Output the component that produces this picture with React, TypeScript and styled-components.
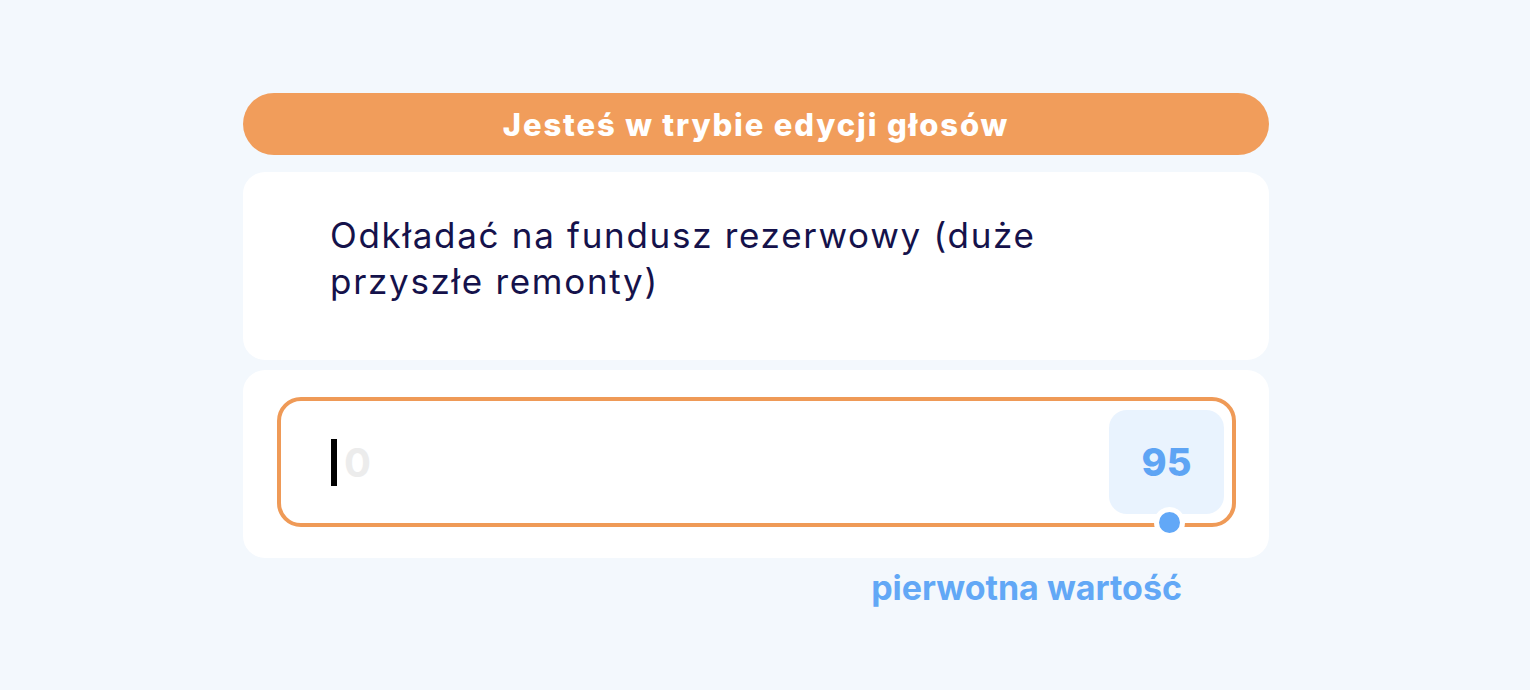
import React from "react";
import styled, { createGlobalStyle } from "styled-components";

const GlobalStyle = createGlobalStyle`
  html, body {
    margin: 0;
    padding: 0;
    background: #f3f8fd;
  }
  body {
    font-family: "Inter", "Noto Sans", sans-serif;
  }
`;

const Page = styled.div`
  width: 1530px;
  height: 690px;
  box-sizing: border-box;
  padding: 93px 0 0 243px;
  background: #f3f8fd;
`;

const Column = styled.div`
  width: 1026px;
  display: flex;
  flex-direction: column;
`;

const Banner = styled.div`
  height: 62px;
  border-radius: 31px;
  background: #f19d5b;
  color: #ffffff;
  display: flex;
  align-items: center;
  justify-content: center;
  font-size: 31px;
  font-weight: 800;
  letter-spacing: 1.85px;
`;

const Card = styled.div<{ $top: number }>`
  margin-top: ${(p) => p.$top}px;
  background: #ffffff;
  border-radius: 22px;
`;

const Question = styled.div`
  padding: 40px 87px 56px;
  font-size: 35px;
  line-height: 46px;
  letter-spacing: 1.7px;
  color: #15124b;
  max-width: 760px;
`;

const InputArea = styled.div`
  padding: 27px 33px 31px 34px;
`;

const Field = styled.div`
  position: relative;
  height: 130px;
  box-sizing: border-box;
  border: 4px solid #ef9a57;
  border-radius: 24px;
  background: #ffffff;
  display: flex;
  align-items: center;
  padding: 0 8px 0 50px;
`;

const Caret = styled.span`
  width: 6px;
  height: 47px;
  background: #000000;
  margin-right: 7px;
`;

const Placeholder = styled.span`
  font-size: 40px;
  font-weight: 700;
  color: #ececec;
`;

const Spacer = styled.div`
  flex: 1;
`;

const Badge = styled.div`
  width: 115px;
  height: 104px;
  border-radius: 18px;
  background: #e9f3fe;
  color: #5ea4f4;
  font-size: 38px;
  font-weight: 800;
  display: flex;
  align-items: center;
  justify-content: center;
`;

const Dot = styled.span`
  position: absolute;
  left: 873px;
  bottom: -15px;
  width: 21px;
  height: 21px;
  border-radius: 50%;
  background: #62a8f7;
  border: 5px solid #ffffff;
`;

const Hint = styled.div`
  display: flex;
  justify-content: flex-end;
  padding: 9px 87px 0 0;
  font-size: 34px;
  font-weight: 700;
  color: #62a8f6;
`;

export default function App() {
  return (
    <>
      <GlobalStyle />
      <Page>
        <Column>
          <Banner>Jesteś w trybie edycji głosów</Banner>
          <Card $top={17}>
            <Question>Odkładać na fundusz rezerwowy (duże przyszłe remonty)</Question>
          </Card>
          <Card $top={10}>
            <InputArea>
              <Field>
                <Caret />
                <Placeholder>0</Placeholder>
                <Spacer />
                <Badge>95</Badge>
                <Dot />
              </Field>
            </InputArea>
          </Card>
          <Hint>pierwotna wartość</Hint>
        </Column>
      </Page>
    </>
  );
}
